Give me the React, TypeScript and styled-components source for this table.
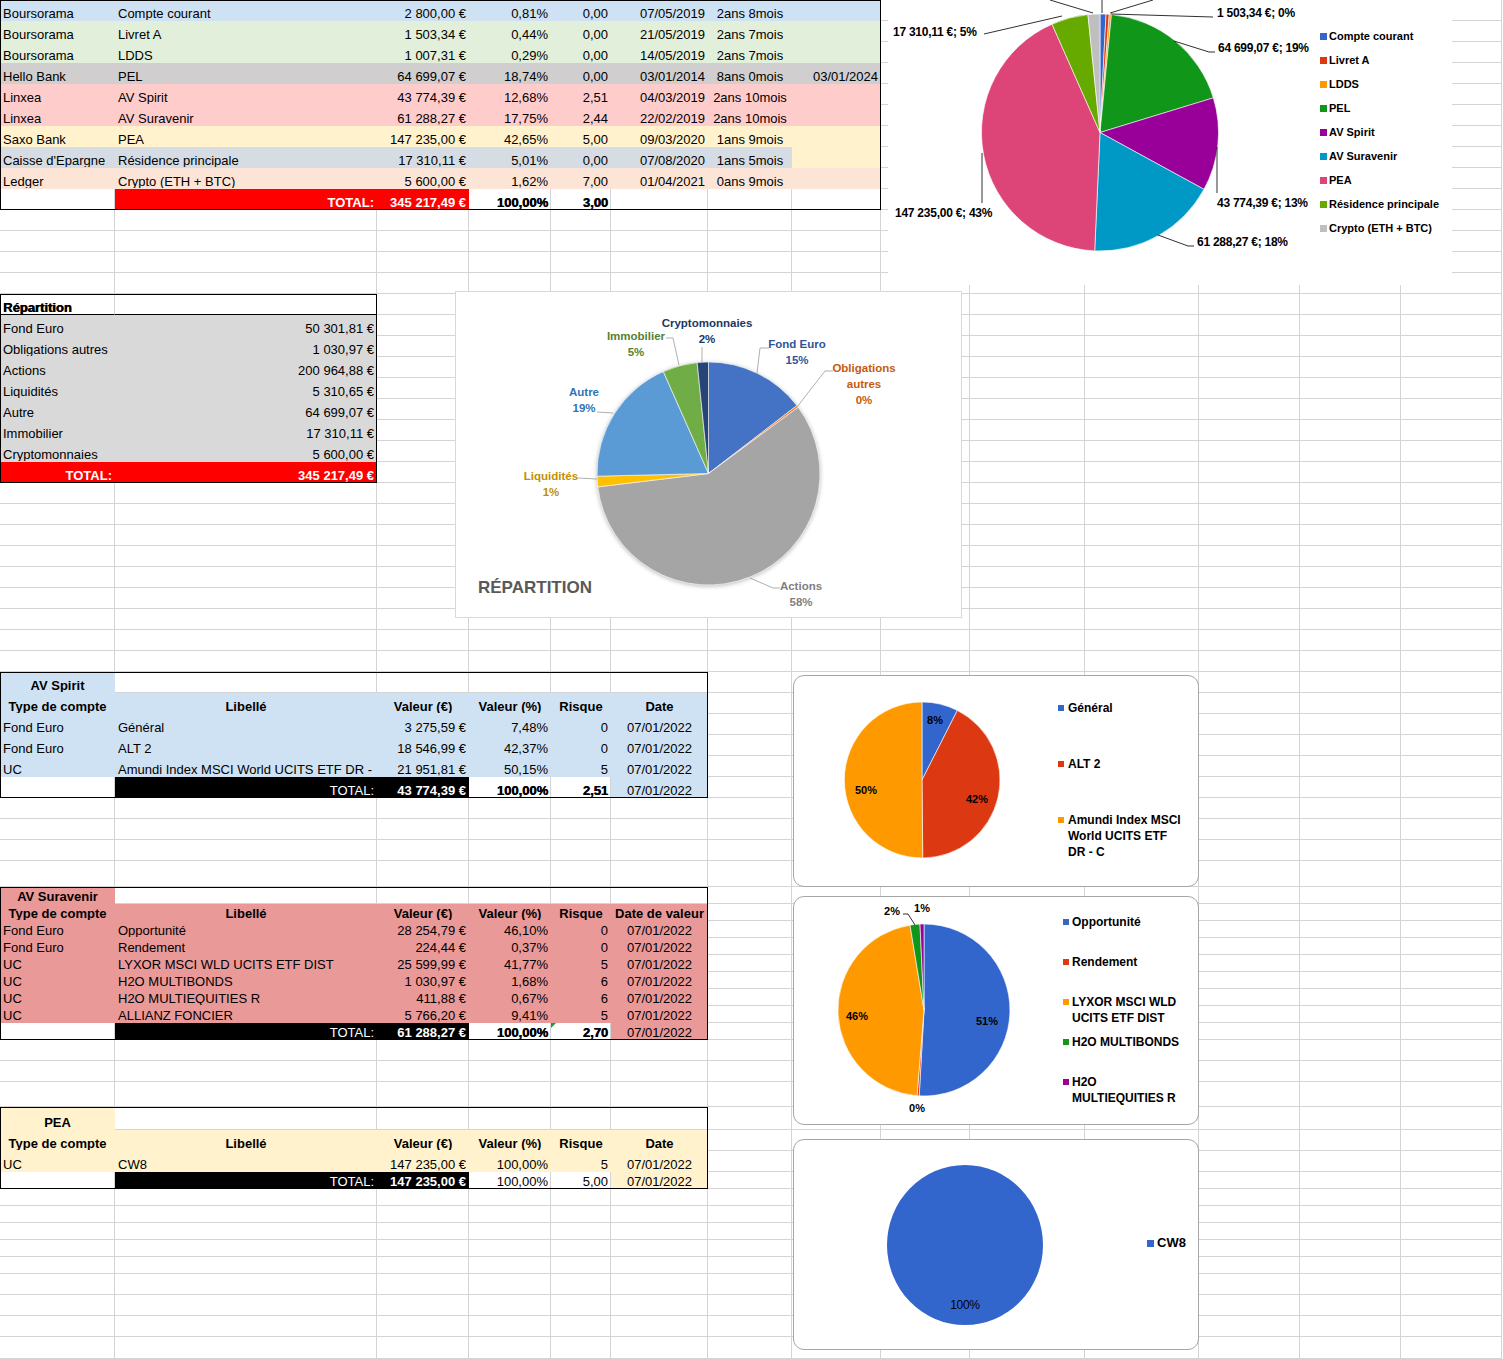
import React from 'react';
import styled, { createGlobalStyle, css } from 'styled-components';

const COLS = [115, 262, 92, 82, 60, 97, 84, 89, 89, 115, 114, 101, 101, 101];
const GRID = '#d4d4d4';

const BLUE = '#cfe2f3';
const GREEN = '#e2efda';
const GREY = '#d0cece';
const PINK = '#ffcccc';
const CREAM = '#fff2cc';
const SLATE = '#d6dce4';
const PEACH = '#fce4d6';
const RED = '#ff0000';
const SALMON = '#ea9999';
const SILVER = '#d9d9d9';

const GlobalStyle = createGlobalStyle`
    html, body {
        margin: 0;
        padding: 0;
        background: #fff;
    }
    body {
        font-family: 'Liberation Sans', Arial, sans-serif;
        font-size: 13px;
        color: #000;
    }
`;

type Align = 'l' | 'r' | 'c';
type CellSpec = { t?: string; a?: Align; b?: boolean; bg?: string; fg?: string; heavy?: boolean; under?: boolean; flag?: boolean };
type RowSpec = { h: number; cells: CellSpec[] };
type BandSpec = { frame?: number; rows: RowSpec[] };

const num = (s: string) => parseFloat(s.replace(/[^\d,]/g, '').replace(',', '.'));

// ---------- sheet data ----------

const accounts: string[][] = [
    ['Boursorama', 'Compte courant', '2 800,00 €', '0,81%', '0,00', '07/05/2019', '2ans 8mois', '', BLUE],
    ['Boursorama', 'Livret A', '1 503,34 €', '0,44%', '0,00', '21/05/2019', '2ans 7mois', '', GREEN],
    ['Boursorama', 'LDDS', '1 007,31 €', '0,29%', '0,00', '14/05/2019', '2ans 7mois', '', GREEN],
    ['Hello Bank', 'PEL', '64 699,07 €', '18,74%', '0,00', '03/01/2014', '8ans 0mois', '03/01/2024', GREY],
    ['Linxea', 'AV Spirit', '43 774,39 €', '12,68%', '2,51', '04/03/2019', '2ans 10mois', '', PINK],
    ['Linxea', 'AV Suravenir', '61 288,27 €', '17,75%', '2,44', '22/02/2019', '2ans 10mois', '', PINK],
    ['Saxo Bank', 'PEA', '147 235,00 €', '42,65%', '5,00', '09/03/2020', '1ans 9mois', '', CREAM],
    ["Caisse d'Epargne", 'Résidence principale', '17 310,11 €', '5,01%', '0,00', '07/08/2020', '1ans 5mois', '', SLATE, CREAM],
    ['Ledger', 'Crypto (ETH + BTC)', '5 600,00 €', '1,62%', '7,00', '01/04/2021', '0ans 9mois', '', PEACH],
];

const topBand: BandSpec = {
    frame: 881,
    rows: [
        ...accounts.map(([bank, name, value, pct, risk, date, age, end, bg, endBg]) => ({
            h: 21,
            cells: [
                { t: bank, bg },
                { t: name, bg },
                { t: value, a: 'r' as Align, bg },
                { t: pct, a: 'r' as Align, bg },
                { t: risk, a: 'r' as Align, bg },
                { t: date, a: 'r' as Align, bg },
                { t: age, a: 'c' as Align, bg },
                { t: end, a: 'r' as Align, bg: endBg ?? bg },
            ],
        })),
        {
            h: 21,
            cells: [
                {},
                { t: 'TOTAL:', a: 'r', b: true, bg: RED, fg: '#fff' },
                { t: '345 217,49 €', a: 'r', b: true, bg: RED, fg: '#fff' },
                { t: '100,00%', a: 'r', heavy: true },
                { t: '3,00', a: 'r', heavy: true },
            ],
        },
    ],
};

const split = [
    ['Fond Euro', '50 301,81 €'],
    ['Obligations autres', '1 030,97 €'],
    ['Actions', '200 964,88 €'],
    ['Liquidités', '5 310,65 €'],
    ['Autre', '64 699,07 €'],
    ['Immobilier', '17 310,11 €'],
    ['Cryptomonnaies', '5 600,00 €'],
];

const splitBand: BandSpec = {
    frame: 377,
    rows: [
        { h: 21, cells: [{ t: 'Répartition', heavy: true, under: true }, { under: true }] },
        ...split.map(([label, value]) => ({
            h: 21,
            cells: [
                { t: label, bg: SILVER },
                { t: value, a: 'r' as Align, bg: SILVER },
            ],
        })),
        {
            h: 21,
            cells: [
                { t: 'TOTAL:', a: 'r', b: true, bg: RED, fg: '#fff' },
                { t: '345 217,49 €', a: 'r', b: true, bg: RED, fg: '#fff' },
            ],
        },
    ],
};

type Fund = {
    title: string;
    bg: string;
    dateHead: string;
    lines: string[][];
    total: string[];
    strong: boolean;
    flag?: boolean;
    heights: number[];
};

const fundBand = ({ title, bg, dateHead, lines, total, strong, flag, heights }: Fund): BandSpec => {
    const head = ['Type de compte', 'Libellé', 'Valeur (€)', 'Valeur (%)', 'Risque', dateHead];
    const rows: CellSpec[][] = [
        [{ t: title, a: 'c', b: true, bg }],
        head.map((t) => ({ t, a: 'c', b: true, bg })),
        ...lines.map((line) =>
            line.map((t, i) => ({ t, a: (i < 2 ? 'l' : i === 5 ? 'c' : 'r') as Align, bg })),
        ),
        [
            {},
            { t: 'TOTAL:', a: 'r', bg: '#000', fg: '#fff' },
            { t: total[0], a: 'r', b: true, bg: '#000', fg: '#fff' },
            { t: total[1], a: 'r', heavy: strong },
            { t: total[2], a: 'r', heavy: strong, flag },
            { t: total[3], a: 'c', bg },
        ],
    ];
    return { frame: 708, rows: rows.map((cells, i) => ({ h: heights[i], cells })) };
};

const spirit = [
    ['Fond Euro', 'Général', '3 275,59 €', '7,48%', '0', '07/01/2022'],
    ['Fond Euro', 'ALT 2', '18 546,99 €', '42,37%', '0', '07/01/2022'],
    ['UC', 'Amundi Index MSCI World UCITS ETF DR - C', '21 951,81 €', '50,15%', '5', '07/01/2022'],
];

const suravenir = [
    ['Fond Euro', 'Opportunité', '28 254,79 €', '46,10%', '0', '07/01/2022'],
    ['Fond Euro', 'Rendement', '224,44 €', '0,37%', '0', '07/01/2022'],
    ['UC', 'LYXOR MSCI WLD UCITS ETF DIST', '25 599,99 €', '41,77%', '5', '07/01/2022'],
    ['UC', 'H2O MULTIBONDS', '1 030,97 €', '1,68%', '6', '07/01/2022'],
    ['UC', 'H2O MULTIEQUITIES R', '411,88 €', '0,67%', '6', '07/01/2022'],
    ['UC', 'ALLIANZ FONCIER', '5 766,20 €', '9,41%', '5', '07/01/2022'],
];

const pea = [['UC', 'CW8', '147 235,00 €', '100,00%', '5', '07/01/2022']];

const blank = (hs: number[]): BandSpec => ({ rows: hs.map((h) => ({ h, cells: [] })) });

const bands: BandSpec[] = [
    topBand,
    blank([21, 21, 21, 21]),
    splitBand,
    blank([21, 21, 21, 21, 21, 21, 21, 21, 21]),
    fundBand({
        title: 'AV Spirit',
        bg: BLUE,
        dateHead: 'Date',
        lines: spirit,
        total: ['43 774,39 €', '100,00%', '2,51', '07/01/2022'],
        strong: true,
        heights: [21, 21, 21, 21, 21, 21],
    }),
    blank([21, 21, 21, 26]),
    fundBand({
        title: 'AV Suravenir',
        bg: SALMON,
        dateHead: 'Date de valeur',
        lines: suravenir,
        total: ['61 288,27 €', '100,00%', '2,70', '07/01/2022'],
        strong: true,
        flag: true,
        heights: [17, 17, 17, 17, 17, 17, 17, 17, 17],
    }),
    blank([21, 21, 25]),
    fundBand({
        title: 'PEA',
        bg: CREAM,
        dateHead: 'Date',
        lines: pea,
        total: ['147 235,00 €', '100,00%', '5,00', '07/01/2022'],
        strong: false,
        heights: [23, 21, 21, 17],
    }),
    blank([17, 17, 17, 17, 17, 21, 21, 21, 22]),
];

// ---------- sheet parts ----------

const Sheet = styled.div`
    position: relative;
    width: 1503px;
    height: 1359px;
    overflow: hidden;
    background: #fff;
`;

const Band = styled.div<{ $frame?: number }>`
    position: relative;
    ${({ $frame }) =>
        $frame &&
        css`
            &::after {
                content: '';
                position: absolute;
                left: 0;
                top: 0;
                bottom: 0;
                width: ${$frame}px;
                box-sizing: border-box;
                border: 1px solid #000;
                pointer-events: none;
            }
        `}
`;

const SheetRow = styled.div<{ $h: number }>`
    display: grid;
    grid-template-columns: ${COLS.map((c) => `${c}px`).join(' ')};
    height: ${({ $h }) => $h}px;
`;

const Cell = styled.div<{
    $align: Align;
    $bg?: string;
    $fg?: string;
    $bold?: boolean;
    $heavy?: boolean;
    $under?: boolean;
    $flag?: boolean;
}>`
    position: relative;
    box-sizing: border-box;
    min-width: 0;
    display: flex;
    align-items: flex-end;
    justify-content: ${({ $align }) => ($align === 'r' ? 'flex-end' : $align === 'c' ? 'center' : 'flex-start')};
    padding: 0 2px 0 3px;
    overflow: hidden;
    white-space: nowrap;
    line-height: 13px;
    background: ${({ $bg }) => $bg ?? '#fff'};
    color: ${({ $fg }) => $fg ?? '#000'};
    font-weight: ${({ $bold, $heavy }) => ($bold || $heavy ? 700 : 400)};
    text-shadow: ${({ $heavy }) => ($heavy ? '0.6px 0 0 currentColor' : 'none')};
    border-right: 1px solid ${({ $bg }) => $bg ?? GRID};
    border-bottom: 1px solid ${({ $bg, $under }) => ($under ? '#000' : $bg ?? GRID)};
    ${({ $flag }) =>
        $flag &&
        css`
            &::before {
                content: '';
                position: absolute;
                left: 0;
                top: 0;
                border-style: solid;
                border-width: 5px 5px 0 0;
                border-color: #1f9a3c transparent transparent transparent;
            }
        `}
`;

// ---------- chart parts ----------

const ChartFrame = styled.div<{ $x: number; $y: number; $w: number; $h: number; $edge?: string; $round?: boolean }>`
    position: absolute;
    left: ${({ $x }) => $x}px;
    top: ${({ $y }) => $y}px;
    width: ${({ $w }) => $w}px;
    height: ${({ $h }) => $h}px;
    box-sizing: border-box;
    display: flex;
    background: #fff;
    border: ${({ $edge }) => ($edge ? `1px solid ${$edge}` : 'none')};
    border-radius: ${({ $round }) => ($round ? '11px' : '0')};
    overflow: hidden;
`;

const Plot = styled.svg`
    display: block;
    flex: none;
`;

const PieShadow = styled.g`
    filter: drop-shadow(0 1px 2px rgba(0, 0, 0, 0.28));
`;

const ChartText = styled.text<{ $c?: string; $s?: number; $w?: number; $ls?: number }>`
    font-family: 'Liberation Sans', Arial, sans-serif;
    font-size: ${({ $s }) => $s ?? 11}px;
    font-weight: ${({ $w }) => $w ?? 700};
    fill: ${({ $c }) => $c ?? '#000'};
    letter-spacing: ${({ $ls }) => $ls ?? 0}px;
`;

const Leader = styled.polyline<{ $c?: string }>`
    fill: none;
    stroke: ${({ $c }) => $c ?? '#1a1a1a'};
    stroke-width: 0.9;
`;

const Legend = styled.div<{ $top: number }>`
    display: flex;
    flex-direction: column;
    padding-top: ${({ $top }) => $top}px;
`;

const LegendItem = styled.div<{ $h: number; $size: number; $line: number; $gap: number }>`
    display: flex;
    align-items: flex-start;
    gap: ${({ $gap }) => $gap}px;
    height: ${({ $h }) => $h}px;
    font-size: ${({ $size }) => $size}px;
    line-height: ${({ $line }) => $line}px;
    font-weight: 700;
    white-space: nowrap;
`;

const Swatch = styled.span<{ $c: string; $s: number; $line: number }>`
    flex: none;
    width: ${({ $s }) => $s}px;
    height: ${({ $s }) => $s}px;
    margin-top: ${({ $s, $line }) => ($line - $s) / 2}px;
    background: ${({ $c }) => $c};
`;

const slice = (cx: number, cy: number, rx: number, ry: number, f0: number, f1: number) => {
    const at = (f: number) => {
        const t = -Math.PI / 2 + 2 * Math.PI * f;
        return `${(cx + rx * Math.cos(t)).toFixed(2)},${(cy + ry * Math.sin(t)).toFixed(2)}`;
    };
    const big = f1 - f0 > 0.5 ? 1 : 0;
    return `M${cx},${cy} L${at(f0)} A${rx},${ry} 0 ${big} 1 ${at(f1)} Z`;
};

type PieProps = { values: number[]; colors: string[]; cx: number; cy: number; rx: number; ry?: number };

const Pie = ({ values, colors, cx, cy, rx, ry = rx }: PieProps) => {
    const total = values.reduce((s, v) => s + v, 0);
    let acc = 0;
    return (
        <g>
            {values.map((v, i) => {
                const f0 = acc / total;
                acc += v;
                const f1 = acc / total;
                return (
                    <path
                        key={i}
                        d={slice(cx, cy, rx, ry, f0, f1)}
                        fill={colors[i]}
                        stroke="#fff"
                        strokeWidth={0.6}
                        strokeLinejoin="round"
                    />
                );
            })}
        </g>
    );
};

type LegendEntry = { lines: string[]; color: string };

const ChartLegend = ({
    entries,
    top,
    slot,
    size,
    line,
    swatch,
    gap,
}: {
    entries: LegendEntry[];
    top: number;
    slot: number;
    size: number;
    line: number;
    swatch: number;
    gap: number;
}) => (
    <Legend $top={top}>
        {entries.map((e) => (
            <LegendItem key={e.lines.join(' ')} $h={slot} $size={size} $line={line} $gap={gap}>
                <Swatch $c={e.color} $s={swatch} $line={line} />
                <span>
                    {e.lines.map((l, i) => (
                        <React.Fragment key={i}>
                            {i > 0 && <br />}
                            {l}
                        </React.Fragment>
                    ))}
                </span>
            </LegendItem>
        ))}
    </Legend>
);

// ---------- charts ----------

const ACCOUNT_COLORS = ['#3366cc', '#dc3912', '#ff9900', '#109618', '#990099', '#0099c6', '#dd4477', '#66aa00', '#bfbfbf'];

const accountLabels = [
    { t: '1 503,34 €; 0%', x: 329, y: 13 },
    { t: '17 310,11 €; 5%', x: 5, y: 32 },
    { t: '64 699,07 €; 19%', x: 330, y: 48 },
    { t: '43 774,39 €; 13%', x: 329, y: 203 },
    { t: '61 288,27 €; 18%', x: 309, y: 242 },
    { t: '147 235,00 €; 43%', x: 7, y: 213 },
];

const accountLeads = [
    '223,14 325,17',
    '162,0 205,13',
    '214,0 214,13',
    '222,13 265,0',
    '96,34 174,16',
    '286,41 321,52 327,52',
    '329,147 329,193',
    '270,235 300,246 306,246',
    '94,153 94,203',
];

const AccountsChart = () => (
    <ChartFrame $x={888} $y={0} $w={564} $h={285}>
        <Plot width={432} height={285}>
            <Pie values={accounts.map((a) => num(a[2]))} colors={ACCOUNT_COLORS} cx={212} cy={132.5} rx={118.5} />
            {accountLeads.map((p) => (
                <Leader key={p} points={p} />
            ))}
            {accountLabels.map((l) => (
                <ChartText key={l.t} x={l.x} y={l.y} $s={12} $ls={-0.25} dominantBaseline="central">
                    {l.t}
                </ChartText>
            ))}
        </Plot>
        <ChartLegend
            entries={accounts.map((a, i) => ({ lines: [a[1]], color: ACCOUNT_COLORS[i] }))}
            top={29}
            slot={24}
            size={11}
            line={14}
            swatch={7}
            gap={2}
        />
    </ChartFrame>
);

const SPLIT_COLORS = ['#4472c4', '#ed7d31', '#a5a5a5', '#ffc000', '#5b9bd5', '#70ad47', '#264478'];

const splitLabels = [
    { lines: ['Cryptomonnaies', '2%'], x: 251, y: 31, c: '#203864', lead: '246,55 246,70' },
    { lines: ['Immobilier', '5%'], x: 180, y: 44, c: '#548235', lead: '210,46 217,46 223,73' },
    { lines: ['Fond Euro', '15%'], x: 341, y: 52, c: '#2f5597', lead: '313,56 304,56 301,81' },
    { lines: ['Obligations', 'autres', '0%'], x: 408, y: 76, c: '#c55a11', lead: '377,79 369,79 341,115' },
    { lines: ['Autre', '19%'], x: 128, y: 100, c: '#2e75b6', lead: '141,120 157,121' },
    { lines: ['Liquidités', '1%'], x: 95, y: 184, c: '#bf9000', lead: '122,186 141,187' },
    { lines: ['Actions', '58%'], x: 345, y: 294, c: '#7f7f7f', lead: '294,286 317,296 324,296' },
];

const SplitChart = () => (
    <ChartFrame $x={455} $y={291} $w={507} $h={327} $edge="#d9d9d9">
        <Plot width={505} height={325}>
            <PieShadow>
                <Pie values={split.map((s) => num(s[1]))} colors={SPLIT_COLORS} cx={252.5} cy={181.5} rx={111.5} />
            </PieShadow>
            {splitLabels.map((l) => (
                <g key={l.lines[0]}>
                    <Leader points={l.lead} $c="#a6a6a6" />
                    {l.lines.map((t, i) => (
                        <ChartText
                            key={t}
                            x={l.x}
                            y={l.y + i * 16}
                            $c={l.c}
                            $s={11.5}
                            textAnchor="middle"
                            dominantBaseline="central"
                        >
                            {t}
                        </ChartText>
                    ))}
                </g>
            ))}
            <ChartText x={22} y={295} $s={17} $c="#595959" dominantBaseline="central">
                RÉPARTITION
            </ChartText>
        </Plot>
    </ChartFrame>
);

const FUND_COLORS = ['#3366cc', '#dc3912', '#ff9900', '#109618', '#990099'];

const SpiritChart = () => (
    <ChartFrame $x={793} $y={675} $w={406} $h={212} $edge="#a6a6a6" $round>
        <Plot width={264} height={210}>
            <Pie values={spirit.map((s) => num(s[2]))} colors={FUND_COLORS} cx={128} cy={104} rx={78} />
            <ChartText x={141} y={44} textAnchor="middle" dominantBaseline="central">8%</ChartText>
            <ChartText x={183} y={123} textAnchor="middle" dominantBaseline="central">42%</ChartText>
            <ChartText x={72} y={114} textAnchor="middle" dominantBaseline="central">50%</ChartText>
        </Plot>
        <ChartLegend
            entries={[
                { lines: ['Général'], color: FUND_COLORS[0] },
                { lines: ['ALT 2'], color: FUND_COLORS[1] },
                { lines: ['Amundi Index MSCI', 'World UCITS ETF', 'DR - C'], color: FUND_COLORS[2] },
            ]}
            top={24}
            slot={56}
            size={12}
            line={16}
            swatch={6}
            gap={4}
        />
    </ChartFrame>
);

const SuravenirChart = () => (
    <ChartFrame $x={793} $y={896} $w={406} $h={229} $edge="#a6a6a6" $round>
        <Plot width={269} height={227}>
            <Pie values={suravenir.slice(0, 5).map((s) => num(s[2]))} colors={FUND_COLORS} cx={130} cy={113} rx={86} />
            <Leader points="109,17 114,17 121,28" />
            <ChartText x={193} y={124} textAnchor="middle" dominantBaseline="central">51%</ChartText>
            <ChartText x={63} y={119} textAnchor="middle" dominantBaseline="central">46%</ChartText>
            <ChartText x={123} y={211} textAnchor="middle" dominantBaseline="central">0%</ChartText>
            <ChartText x={98} y={14} textAnchor="middle" dominantBaseline="central">2%</ChartText>
            <ChartText x={128} y={11} textAnchor="middle" dominantBaseline="central">1%</ChartText>
        </Plot>
        <ChartLegend
            entries={[
                { lines: ['Opportunité'], color: FUND_COLORS[0] },
                { lines: ['Rendement'], color: FUND_COLORS[1] },
                { lines: ['LYXOR MSCI WLD', 'UCITS ETF DIST'], color: FUND_COLORS[2] },
                { lines: ['H2O MULTIBONDS'], color: FUND_COLORS[3] },
                { lines: ['H2O', 'MULTIEQUITIES R'], color: FUND_COLORS[4] },
            ]}
            top={17}
            slot={40}
            size={12}
            line={16}
            swatch={6}
            gap={3}
        />
    </ChartFrame>
);

const PeaChart = () => (
    <ChartFrame $x={793} $y={1139} $w={406} $h={211} $edge="#a6a6a6" $round>
        <Plot width={353} height={209}>
            <ellipse cx={171} cy={105} rx={78} ry={80} fill="#3366cc" />
            <ChartText x={171} y={165} $w={400} $s={12} $ls={-0.3} textAnchor="middle" dominantBaseline="central">
                100%
            </ChartText>
        </Plot>
        <ChartLegend
            entries={[{ lines: ['CW8'], color: '#3366cc' }]}
            top={95}
            slot={20}
            size={13}
            line={16}
            swatch={7}
            gap={3}
        />
    </ChartFrame>
);

// ---------- page ----------

const App = () => (
    <>
        <GlobalStyle />
        <Sheet>
            {bands.map((band, bi) => (
                <Band key={bi} $frame={band.frame}>
                    {band.rows.map((row, ri) => (
                        <SheetRow key={ri} $h={row.h}>
                            {COLS.map((_, ci) => {
                                const c = row.cells[ci] ?? {};
                                return (
                                    <Cell
                                        key={ci}
                                        $align={c.a ?? 'l'}
                                        $bg={c.bg}
                                        $fg={c.fg}
                                        $bold={c.b}
                                        $heavy={c.heavy}
                                        $under={c.under}
                                        $flag={c.flag}
                                    >
                                        {c.t}
                                    </Cell>
                                );
                            })}
                        </SheetRow>
                    ))}
                </Band>
            ))}
            <AccountsChart />
            <SplitChart />
            <SpiritChart />
            <SuravenirChart />
            <PeaChart />
        </Sheet>
    </>
);

export default App;
